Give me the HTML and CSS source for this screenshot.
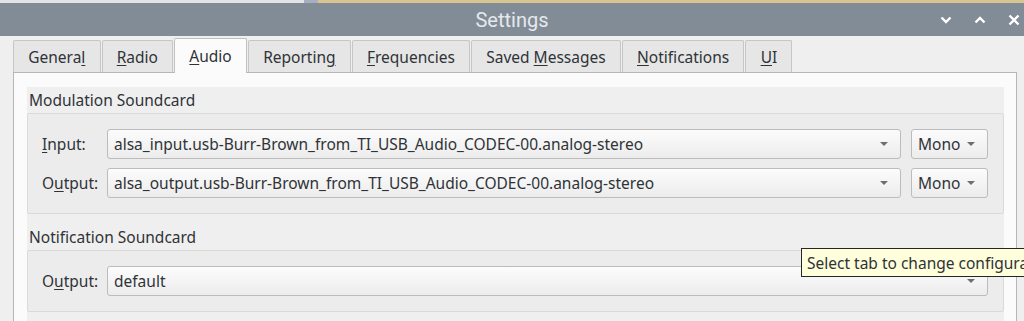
FILE: index.html
```html
<!doctype html>
<html lang="en">
    <head>
        <meta charset="UTF-8" />
        <meta name="viewport" content="width=device-width, initial-scale=1.0" />
        <title>Settings</title>
        <link rel="stylesheet" href="styles.css">
    </head>
    <body>
        <div class="strip">
            <div class="strip-left"></div>
            <div class="strip-sep"></div>
            <div class="strip-right"></div>
        </div>
        <div class="titlebar">
            <span></span>
            <div class="title">Settings</div>
            <div class="controls">
                <svg width="12" height="8" viewBox="0 0 12 8"><path d="M1.5 1.5 L6 6 L10.5 1.5" /></svg>
                <svg width="12" height="8" viewBox="0 0 12 8"><path d="M1.5 6.5 L6 2 L10.5 6.5" /></svg>
                <svg width="12" height="12" viewBox="0 0 12 12"><path d="M1.5 1.5 L10.5 10.5 M10.5 1.5 L1.5 10.5" /></svg>
            </div>
        </div>

        <div class="window">
            <div class="tabs">
                <div class="tab"><span>Genera<u>l</u></span></div>
                <div class="tab"><span><u>R</u>adio</span></div>
                <div class="tab active"><span><u>A</u>udio</span></div>
                <div class="tab"><span>Reportin<u>g</u></span></div>
                <div class="tab"><span><u>F</u>requencies</span></div>
                <div class="tab"><span>Saved <u>M</u>essages</span></div>
                <div class="tab"><span><u>N</u>otifications</span></div>
                <div class="tab"><span><u>U</u>I</span></div>
            </div>
            <div class="pane">
                <div class="groups">
                    <div class="group">
                        <div class="group-title">Modulation Soundcard</div>
                        <div class="frame">
                            <div class="row">
                                <span class="label"><u>I</u>nput:</span>
                                <div class="combo wide">alsa_input.usb-Burr-Brown_from_TI_USB_Audio_CODEC-00.analog-stereo</div>
                                <div class="combo small">Mono</div>
                            </div>
                            <div class="row">
                                <span class="label">O<u>u</u>tput:</span>
                                <div class="combo wide">alsa_output.usb-Burr-Brown_from_TI_USB_Audio_CODEC-00.analog-stereo</div>
                                <div class="combo small">Mono</div>
                            </div>
                        </div>
                    </div>
                    <div class="group">
                        <div class="group-title">Notification Soundcard</div>
                        <div class="frame">
                            <div class="row">
                                <span class="label">O<u>u</u>tput:</span>
                                <div class="combo wide">default</div>
                            </div>
                        </div>
                    </div>
                </div>
            </div>
        </div>

        <div class="tooltip">Select tab to change configura</div>
    </body>
</html>
```

FILE: styles.css
```css
body {
    margin: 0;
    height: 321px;
    overflow: hidden;
    background-color: #efefef;
    font-family: "Noto Sans", "Open Sans", sans-serif;
    font-size: 15.5px;
    color: #2f3337;
    position: relative;
}

u {
    text-decoration: underline;
    text-underline-offset: 2px;
}

.strip {
    display: flex;
    height: 3px;
}

.strip-left {
    width: 304px;
    background-color: #e4e4e4;
}

.strip-sep {
    width: 14px;
    background-color: #a8aec0;
}

.strip-right {
    flex: 1;
    background-color: #d7c48f;
}

.titlebar {
    display: grid;
    grid-template-columns: 1fr auto 1fr;
    align-items: center;
    height: 33px;
    background-color: #818c97;
}

.title {
    font-family: Roboto, sans-serif;
    font-size: 20px;
    color: #e6e9ec;
}

.controls {
    justify-self: end;
    display: flex;
    align-items: center;
    gap: 22px;
    padding-right: 4px;
}

.controls svg path {
    fill: none;
    stroke: #ffffff;
    stroke-width: 2.4;
}

.window {
    padding: 4px 7px 0 13px;
}

.tabs {
    display: flex;
    height: 32px;
    position: relative;
    z-index: 1;
}

.tab {
    display: flex;
    align-items: center;
    padding: 0 14.2px;
    height: 32px;
    box-sizing: border-box;
    background-color: #e6e6e6;
    border: 1px solid #c6c6c6;
    border-bottom: none;
    border-radius: 2px 2px 0 0;
    margin-right: 1px;
    white-space: nowrap;
}

.tab.active {
    height: 35px;
    margin-top: -2px;
    background-color: #fbfbfb;
    border-color: #c0c0c0;
}

.pane {
    border: 1px solid #b6b6b6;
    background-color: #fbfbfb;
    padding: 14px 12px 0 13px;
    height: 236px;
}

.groups {
    background-color: #efefef;
    display: flex;
    flex-direction: column;
    gap: 10px;
    height: 100%;
}

.group-title {
    height: 26px;
    line-height: 26px;
    padding-left: 2px;
}

.frame {
    border: 1px solid #dadada;
    border-radius: 2px;
    background-color: #ececec;
    padding: 15px 15px 15px 14px;
    display: flex;
    flex-direction: column;
    gap: 9px;
}

.row {
    display: flex;
    align-items: center;
}

.label {
    width: 65px;
    flex: none;
}

.combo {
    position: relative;
    height: 30px;
    box-sizing: border-box;
    display: flex;
    align-items: center;
    padding-left: 6px;
    background: linear-gradient(#fcfcfc, #ececec);
    border: 1px solid #bcbcbc;
    border-radius: 3px;
    white-space: nowrap;
}

.combo::after {
    content: "";
    position: absolute;
    right: 12px;
    top: 12px;
    border-left: 4px solid transparent;
    border-right: 4px solid transparent;
    border-top: 4px solid #6e6e6e;
}

.combo.wide {
    flex: 1;
}

.combo.small {
    width: 77px;
    margin-left: 10px;
}

.tooltip {
    position: absolute;
    left: 801px;
    top: 248px;
    height: 29px;
    box-sizing: border-box;
    padding: 0 5px;
    display: flex;
    align-items: center;
    background-color: #ffffdc;
    border: 1px solid #262626;
    border-right: none;
    width: 223px;
    overflow: hidden;
    white-space: nowrap;
}
```
